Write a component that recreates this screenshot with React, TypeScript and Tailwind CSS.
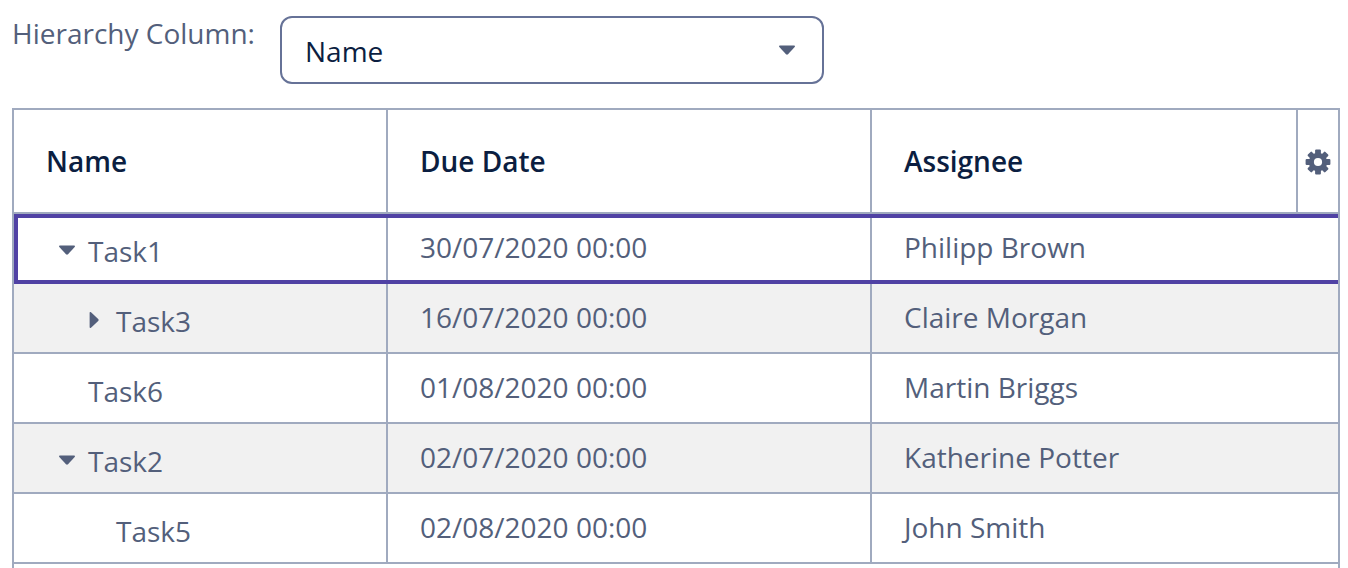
import React from "react";

type Row = {
  name: string;
  date: string;
  assignee: string;
  level: number;
  toggle?: "open" | "closed";
  selected?: boolean;
};

const rows: Row[] = [
  { name: "Task1", date: "30/07/2020 00:00", assignee: "Philipp Brown", level: 0, toggle: "open", selected: true },
  { name: "Task3", date: "16/07/2020 00:00", assignee: "Claire Morgan", level: 1, toggle: "closed" },
  { name: "Task6", date: "01/08/2020 00:00", assignee: "Martin Briggs", level: 0 },
  { name: "Task2", date: "02/07/2020 00:00", assignee: "Katherine Potter", level: 0, toggle: "open" },
  { name: "Task5", date: "02/08/2020 00:00", assignee: "John Smith", level: 1 },
];

function CaretDown() {
  return (
    <svg width="18" height="10" viewBox="0 0 18 10" fill="#535f7b">
      <path d="M1.8 0.6H16.2C17 0.6 17.2 1.4 16.7 2L10 9.2C9.4 9.8 8.6 9.8 8 9.2L1.3 2C0.8 1.4 1 0.6 1.8 0.6Z" />
    </svg>
  );
}

function CaretRight() {
  return (
    <svg width="10" height="18" viewBox="0 0 10 18" fill="#535f7b">
      <path d="M0.6 1.8V16.2C0.6 17 1.4 17.2 2 16.7L9.2 10C9.8 9.4 9.8 8.6 9.2 8L2 1.3C1.4 0.8 0.6 1 0.6 1.8Z" />
    </svg>
  );
}

function Gear() {
  const teeth = [0, 45, 90, 135];
  return (
    <svg width="26" height="26" viewBox="-13 -13 26 26" fill="#535f7b">
      {teeth.map((a) => (
        <rect key={a} x="-2.9" y="-12.4" width="5.8" height="24.8" rx="1" transform={`rotate(${a})`} />
      ))}
      <circle r="9.2" />
      <circle r="4.1" fill="#ffffff" />
    </svg>
  );
}

export default function App() {
  return (
    <div className="h-[568px] w-[1348px] overflow-hidden bg-white pl-3 font-['Open_Sans',sans-serif] text-[28px] leading-[38px] text-[#535f7b]">
      <div className="flex h-[108px] items-start">
        <label className="w-[268px] pt-[14px] whitespace-nowrap">Hierarchy Column:</label>
        <div className="mt-4 flex h-[68px] w-[544px] items-start justify-between rounded-xl border-2 border-[#667297] pt-[14px] pr-[26px] pl-[23px] text-[#0b1e41]">
          <span>Name</span>
          <span className="mt-[13px] flex">
            <CaretDown />
          </span>
        </div>
      </div>
      <div className="w-[1328px] border-2 border-b-0 border-[#a0aabf]">
        <div className="flex h-[104px] border-b-2 border-[#a0aabf] font-semibold text-[#0b1e41]">
          <div className="w-[374px] border-r-2 border-[#a0aabf] pt-8 pl-8">Name</div>
          <div className="w-[484px] border-r-2 border-[#a0aabf] pt-8 pl-8">Due Date</div>
          <div className="w-[426px] border-r-2 border-[#a0aabf] pt-8 pl-8">Assignee</div>
          <div className="flex w-10 items-center justify-center pt-0.5">
            <Gear />
          </div>
        </div>
        {rows.map((row, i) => (
          <div key={i} className={`relative flex h-[70px] border-b-2 border-[#a0aabf] ${i % 2 ? "bg-[#f1f1f1]" : "bg-white"}`}>
            <div className={`flex w-[374px] border-r-2 border-[#a0aabf] pt-[18px] ${row.level ? "pl-[75px]" : "pl-11"}`}>
              <span className={row.level ? "w-[27px] pt-[9px]" : "w-[30px] pt-[13px]"}>
                {row.toggle === "open" && <CaretDown />}
                {row.toggle === "closed" && <CaretRight />}
              </span>
              <span>{row.name}</span>
            </div>
            <div className="w-[484px] border-r-2 border-[#a0aabf] pt-[14px] pl-8">{row.date}</div>
            <div className="flex-1 pt-[14px] pl-8">{row.assignee}</div>
            {row.selected && <div className="absolute inset-x-0 top-0 -bottom-0.5 border-4 border-r-0 border-[#5042a4]" />}
          </div>
        ))}
        <div className="h-4" />
      </div>
    </div>
  );
}
